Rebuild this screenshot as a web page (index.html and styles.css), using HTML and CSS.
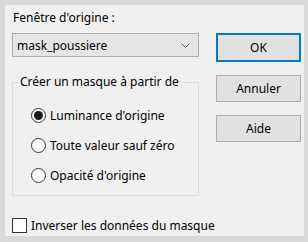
FILE: index.html
```html
<!DOCTYPE html>
<html lang="fr">
<head>
  <meta charset="UTF-8">
  <title>Créer un masque</title>
  <link rel="stylesheet" href="styles.css">
</head>
<body>
  <div class="frame">
    <div class="dialog">
      <div class="main-col">
        <p class="label">Fenêtre d'origine :</p>
        <div class="combo">
          <span>mask_poussiere</span>
          <svg class="chevron" width="9" height="5" viewBox="0 0 9 5"><path d="M0.5 0.5 L4.5 4.5 L8.5 0.5" fill="none" stroke="#606060" stroke-width="1"/></svg>
        </div>
        <fieldset class="group">
          <legend>Créer un masque à partir de</legend>
          <label class="radio"><span class="dot checked"></span>Luminance d'origine</label>
          <label class="radio"><span class="dot"></span>Toute valeur sauf zéro</label>
          <label class="radio"><span class="dot"></span>Opacité d'origine</label>
        </fieldset>
        <label class="check"><span class="box"></span>Inverser les données du masque</label>
      </div>
      <div class="side-col">
        <button type="button" class="btn default">OK</button>
        <button type="button" class="btn">Annuler</button>
        <button type="button" class="btn">Aide</button>
      </div>
    </div>
  </div>
</body>
</html>
```

FILE: styles.css
```css
*{
  margin: 0;
  padding: 0;
  box-sizing: border-box;
}
body{
  font-family: "Noto Sans", "Open Sans", sans-serif;
  font-size: 12px;
  white-space: nowrap;
  color: #000;
  background-color: #dcdcdc;
}
.frame{
  width: 308px;
  height: 242px;
  padding: 5px 4px 6px 5px;
  background-color: #d9d9d9;
}
.dialog{
  display: flex;
  height: 100%;
  padding: 5px 3px 0 7px;
  background-color: #f0f0f0;
}
.main-col{
  width: 187px;
  display: flex;
  flex-direction: column;
}
.label{
  height: 16px;
  line-height: 16px;
  padding-left: 1px;
}
.combo{
  margin-top: 7px;
  height: 24px;
  display: flex;
  align-items: center;
  justify-content: space-between;
  padding: 0 8px 0 4px;
  background-color: #e5e5e5;
  border: 1px solid #adadad;
}
.chevron{
  display: block;
}
.group{
  margin-top: 17px;
  height: 122px;
  border: 1px solid #dcdcdc;
  padding: 10px 0 0 0;
}
.group legend{
  margin-left: 5px;
  padding: 0 2px;
  line-height: 16px;
}
.radio{
  height: 30px;
  display: flex;
  align-items: center;
  gap: 4px;
  padding-left: 18px;
}
.dot{
  flex-shrink: 0;
  width: 15px;
  height: 15px;
  border: 1px solid #333;
  border-radius: 50%;
  background-color: #fff;
  display: flex;
  align-items: center;
  justify-content: center;
}
.dot.checked::after{
  content: '';
  width: 9px;
  height: 9px;
  border-radius: 50%;
  background-color: #1a1a1a;
}
.check{
  margin-top: 21px;
  height: 16px;
  display: flex;
  align-items: center;
  gap: 4px;
}
.box{
  flex-shrink: 0;
  width: 15px;
  height: 15px;
  border: 1px solid #333;
  background-color: #fff;
}
.side-col{
  margin-left: 17px;
  width: 85px;
  display: flex;
  flex-direction: column;
  padding-top: 23px;
}
.btn{
  height: 27px;
  font: inherit;
  color: #000;
  background-color: #e1e1e1;
  border: 1px solid #adadad;
  margin-bottom: 13px;
}
.btn.default{
  height: 29px;
  border: 2px solid #0078d7;
}
```
